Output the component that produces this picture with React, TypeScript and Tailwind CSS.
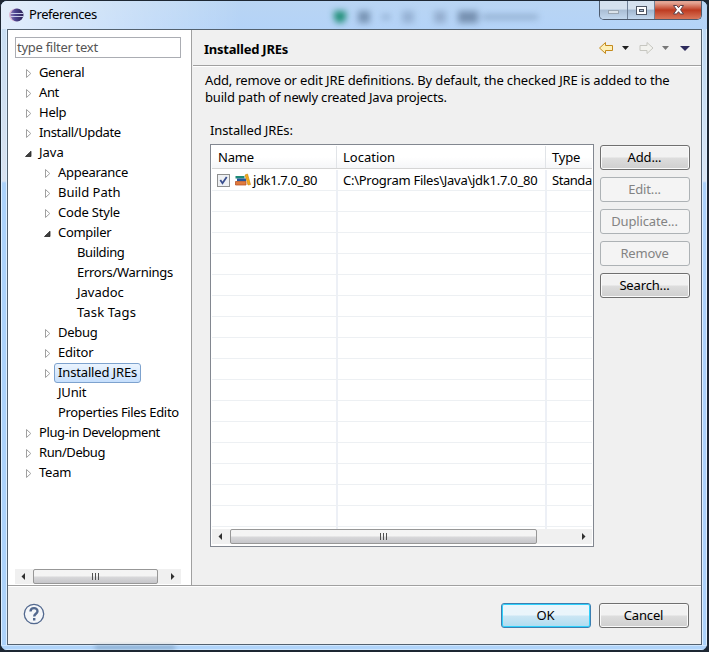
import { ReactNode } from "react";
import clsx from "clsx";

type TreeItem = {
  label: string;
  level: 0 | 1 | 2;
  state?: "open" | "closed";
  selected?: boolean;
  tracking?: string;
};

const treeItems: TreeItem[] = [
  { label: "General", level: 0, state: "closed", tracking: "tracking-[-0.4px]" },
  { label: "Ant", level: 0, state: "closed", tracking: "tracking-[-0.4px]" },
  { label: "Help", level: 0, state: "closed", tracking: "tracking-[-0.25px]" },
  { label: "Install/Update", level: 0, state: "closed", tracking: "tracking-[-0.37px]" },
  { label: "Java", level: 0, state: "open" },
  { label: "Appearance", level: 1, state: "closed", tracking: "tracking-[-0.3px]" },
  { label: "Build Path", level: 1, state: "closed" },
  { label: "Code Style", level: 1, state: "closed", tracking: "tracking-[-0.2px]" },
  { label: "Compiler", level: 1, state: "open", tracking: "tracking-[-0.3px]" },
  { label: "Building", level: 2, tracking: "tracking-[-0.4px]" },
  { label: "Errors/Warnings", level: 2, tracking: "tracking-[-0.28px]" },
  { label: "Javadoc", level: 2 },
  { label: "Task Tags", level: 2, tracking: "tracking-[0.15px]" },
  { label: "Debug", level: 1, state: "closed", tracking: "tracking-[-0.3px]" },
  { label: "Editor", level: 1, state: "closed", tracking: "tracking-[-0.2px]" },
  {
    label: "Installed JREs",
    level: 1,
    state: "closed",
    selected: true,
    tracking: "tracking-[-0.15px]",
  },
  { label: "JUnit", level: 1, tracking: "tracking-[-0.2px]" },
  { label: "Properties Files Edito", level: 1, tracking: "tracking-[-0.33px]" },
  { label: "Plug-in Development", level: 0, state: "closed", tracking: "tracking-[-0.38px]" },
  { label: "Run/Debug", level: 0, state: "closed", tracking: "tracking-[-0.42px]" },
  { label: "Team", level: 0, state: "closed", tracking: "tracking-[-0.25px]" },
];

function Twisty({ state }: { state?: "open" | "closed" }) {
  return (
    <svg width="9" height="11" viewBox="0 0 9 11" className="shrink-0">
      {state === "closed" && (
        <path d="M2.5 1.5v8l4.300-4z" fill="#fff" stroke="#a0a0a0" />
      )}
      {state === "open" && (
        <path d="M7 3.200v5.300H1.500z" fill="#404040" stroke="#262626" strokeWidth="0.8" />
      )}
    </svg>
  );
}

function TreeRow({ item }: { item: TreeItem }) {
  return (
    <div
      className={clsx(
        "flex h-5 items-center",
        item.level === 0 && "pl-[9px]",
        item.level === 1 && "pl-7",
        item.level === 2 && "pl-[47px]",
      )}
    >
      <Twisty state={item.state} />
      <span
        className={clsx(
          "ml-[2px] flex h-5 items-center rounded-[3px] border px-[3px] pb-[2px]",
          item.tracking,
          item.selected
            ? "border-[#7da2ce] bg-linear-to-b from-[#ebf4fe] to-[#c6dffc]"
            : "border-transparent",
        )}
      >
        {item.label}
      </span>
    </div>
  );
}

function ScrollBar({ thumb }: { thumb: string }) {
  return (
    <div className="flex h-[15px] shrink-0 items-center bg-[#f0f0f0]">
      <svg width="18" height="15" className="shrink-0">
        <path d="M10 4v7L6.5 7.5z" fill="#303030" />
      </svg>
      <div
        className={clsx(
          "flex h-[15px] items-center justify-center gap-[2px] rounded-[2px] border border-[#979797] bg-linear-to-b from-[#f4f4f4] from-45% via-[#d8d8da] via-55% to-[#c6c6ca]",
          thumb,
        )}
      >
        <i className="h-[7px] w-px bg-[#505050]" />
        <i className="h-[7px] w-px bg-[#505050]" />
        <i className="h-[7px] w-px bg-[#505050]" />
      </div>
      <div className="grow" />
      <svg width="18" height="15" className="shrink-0">
        <path d="M8 4v7l3.500-3.500z" fill="#303030" />
      </svg>
    </div>
  );
}

function Button({
  children,
  disabled,
  primary,
}: {
  children: ReactNode;
  disabled?: boolean;
  primary?: boolean;
}) {
  return (
    <button
      disabled={disabled}
      className={clsx(
        "flex h-[25px] w-[90px] items-center justify-center rounded-[3px] border pr-px tracking-[-0.15px]",
        disabled && "border-[#adb2b5] bg-[#f4f4f4] text-[#838383]",
        primary &&
          "border-[#3c7fb1] bg-linear-to-b from-[#eaf5fb] from-48% via-[#cbe6f4] via-52% to-[#aedcf0] shadow-[inset_0_0_0_1px_#2fd0fb]",
        !disabled &&
          !primary &&
          "border-[#707070] bg-linear-to-b from-[#f2f2f2] from-48% via-[#dddddd] via-52% to-[#cfcfcf] shadow-[inset_0_0_0_1px_#fafafa]",
      )}
    >
      {children}
    </button>
  );
}

function EclipseIcon() {
  return (
    <svg width="15" height="14" viewBox="0 0 15 14" className="shrink-0">
      <defs>
        <linearGradient id="ball" x1="0" x2="1">
          <stop offset="0" stopColor="#8d7ab4" />
          <stop offset="0.35" stopColor="#4d4591" />
          <stop offset="1" stopColor="#2c2255" />
        </linearGradient>
      </defs>
      <circle cx="6.500" cy="7" r="6.500" fill="#dcbcd6" />
      <circle cx="8" cy="7" r="6.500" fill="url(#ball)" />
      <path d="M1.500 5.500h13M1.500 8.500h13" stroke="#c9cdea" strokeWidth="1" />
    </svg>
  );
}

function TitleBar() {
  return (
    <div className="relative flex h-7 shrink-0 justify-between bg-linear-to-b from-[#b9d5f3] to-[#b4d3f8]">
      <div className="absolute left-0 top-0 h-7 w-60 bg-linear-to-r from-white/60 to-transparent" />
      <div className="absolute left-[333px] top-[10px] flex items-center gap-3 blur-[3px]">
        <i className="h-3 w-3 rounded-b-full bg-[#1f8f78]" />
        <i className="h-3 w-3 bg-[#7894b4]" />
        <i className="h-1 w-2 bg-[#8aa6c8]" />
        <i className="h-3 w-3 bg-[#96b2d4]" />
        <i className="ml-2 h-3 w-3 bg-[#94aecf]" />
        <i className="h-3 w-5 bg-[#7690b0]" />
        <i className="-ml-2 h-1 w-14 bg-[#8aa6c6]" />
      </div>
      <div className="relative flex items-center gap-[5px] pb-px pl-[8px]">
        <EclipseIcon />
        <span className="tracking-[-0.42px]">Preferences</span>
      </div>
      <div className="relative mr-[5px] flex h-[19px] overflow-hidden rounded-b-[5px] border border-t-0 border-[#4d5b6e]">
        <div className="flex w-7 items-center justify-center border-r border-[#6f8096] bg-linear-to-b from-[#d5e1ee] from-45% via-[#a9bdd4] via-50% to-[#c3d8ee] pt-1">
          <svg width="13" height="6">
            <rect x="1.500" y="1.500" width="10" height="3" fill="#dbe3ea" stroke="#9aa6b2" />
          </svg>
        </div>
        <div className="flex w-[27px] items-center justify-center border-r border-[#6f8096] bg-linear-to-b from-[#d5e1ee] from-45% via-[#a0b6cf] via-50% to-[#c3d8ee]">
          <svg width="13" height="11">
            <rect x="1.500" y="1.500" width="10" height="8" fill="#fff" stroke="#4d5564" />
            <rect x="4.500" y="4.500" width="4" height="2" fill="#a8bad0" stroke="#4d5564" />
          </svg>
        </div>
        <div className="flex w-[46px] items-center justify-center bg-linear-to-b from-[#e3a493] from-10% via-[#bd3a20] via-50% to-[#d9765a]">
          <svg width="13" height="12" viewBox="0 0 13 12">
            <path
              d="M1.500 1.500h3.200l1.800 2.200 1.800-2.200h3.200L8.500 5.700l3 4.300H8.300L6.500 7.700 4.700 10H1.500l3-4.300z"
              fill="#fff"
              stroke="#5b4048"
            />
          </svg>
        </div>
      </div>
    </div>
  );
}

function Sidebar() {
  return (
    <div className="flex w-[184px] shrink-0 flex-col border-r border-[#a0a0a0] bg-white pl-[7px] pr-[10px] pt-[7px]">
      <div className="flex h-[21px] shrink-0 items-center border border-[#abadb3] pl-px tracking-[-0.28px] text-[#555]">
        type filter text
      </div>
      <div className="mt-[5px] grow overflow-hidden whitespace-nowrap">
        {treeItems.map((item) => (
          <TreeRow key={item.label} item={item} />
        ))}
      </div>
      <div className="mb-px">
        <ScrollBar thumb="w-[125px]" />
      </div>
    </div>
  );
}

function NavArrows() {
  return (
    <svg width="94" height="14" viewBox="0 0 94 14">
      <path d="M1.500 7l6-5.500v3h7v5h-7v3z" fill="#fdf0b8" stroke="#c48a1c" />
      <path d="M24 5h7l-3.500 4z" fill="#202020" />
      <path d="M55 7l-6-5.500v3h-7v5h7v3z" fill="#f2f2ee" stroke="#c6c6c0" />
      <path d="M64 5h7l-3.500 4z" fill="#777" />
      <path d="M82 5h10l-5 5z" fill="#2d2a5c" />
    </svg>
  );
}

function LibraryIcon() {
  return (
    <svg width="16" height="14" viewBox="0 0 16 14" className="shrink-0">
      <path d="M0.500 3h9v2.500h-9z" fill="#1f8a78" />
      <path d="M2 5.500h9V8H2z" fill="#27579c" />
      <path d="M0.500 8.500h10.500v3.500H0.500z" fill="#e07a3c" stroke="#b9552a" strokeWidth="0.8" />
      <path d="M10 2l2.500-1L15.500 11.500l-2.500.5z" fill="#f2a91e" stroke="#c98208" strokeWidth="0.6" />
    </svg>
  );
}

function JreTable() {
  return (
    <div className="flex h-[403px] w-[384px] flex-col border border-[#828790] bg-white px-px pb-[2px] pt-px">
      <div className="flex h-[23px] shrink-0 items-center overflow-hidden whitespace-nowrap border-b border-[#d5d5d5] bg-linear-to-b from-white from-50% to-[#f5f6f8]">
        <div className="flex h-full w-[125px] shrink-0 items-center border-r border-[#e1e4e8] pl-[6px] tracking-[-0.2px]">
          Name
        </div>
        <div className="flex h-full w-[209px] shrink-0 items-center border-r border-[#e1e4e8] pl-[6px]">
          Location
        </div>
        <div className="pl-[6px] tracking-[-0.2px]">Type</div>
      </div>
      <div className="flex h-0 grow flex-col overflow-hidden">
        {Array.from({ length: 18 }, (_, row) => (
          <div
            key={row}
            className={clsx(
              "flex shrink-0 overflow-hidden whitespace-nowrap border-b border-[#edf0f3]",
              row === 0 ? "h-[22px] pt-px" : "h-[21px]",
            )}
          >
            <div className="flex w-[126px] shrink-0 items-center border-r-2 border-[#edf0f6] pl-[5px]">
              {row === 0 && (
                <>
                  <span className="mr-[5px] flex h-[13px] w-[13px] shrink-0 items-center justify-center border border-[#8e8f8f] bg-[#eef0f3]">
                    <svg width="9" height="9" viewBox="0 0 9 9">
                      <path d="M1.300 4l2.200 3.200L7.700 1" fill="none" stroke="#3a4f8f" strokeWidth="1.800" />
                    </svg>
                  </span>
                  <LibraryIcon />
                  <span className="ml-[2px] tracking-[-0.38px]">jdk1.7.0_80</span>
                </>
              )}
            </div>
            <div className="flex w-[209px] shrink-0 items-center border-r-2 border-[#edf0f6] pl-[5px] tracking-[-0.26px]">
              {row === 0 && "C:\\Program Files\\Java\\jdk1.7.0_80"}
            </div>
            <div className="flex items-center pl-[5px] tracking-[-0.45px]">{row === 0 && "Standa"}</div>
          </div>
        ))}
      </div>
      <ScrollBar thumb="w-[307px]" />
    </div>
  );
}

function JrePage() {
  return (
    <div className="flex grow flex-col pl-px">
      <div className="flex h-9 shrink-0 items-center justify-between border-b border-[#a0a0a0] pl-[11px] pr-[9px]">
        <h1 className="pt-[3px] font-bold tracking-[-0.22px]">Installed JREs</h1>
        <NavArrows />
      </div>
      <div className="border-t border-white pl-[12px]">
        <p className="mt-[5px] leading-[17px] tracking-[-0.15px]">
          Add, remove or edit JRE definitions. By default, the checked JRE is added to the
          <br />
          <span className="tracking-[-0.19px]">build path of newly created Java projects.</span>
        </p>
      </div>
      <div className="mt-[16px] pl-[17px] leading-[17px] tracking-[-0.12px]">Installed JREs:</div>
      <div className="mt-[5px] flex gap-[6px] pl-[17px]">
        <JreTable />
        <div className="mt-px flex flex-col gap-[7px]">
          <Button>Add...</Button>
          <Button disabled>Edit...</Button>
          <Button disabled>Duplicate...</Button>
          <Button disabled>Remove</Button>
          <Button>Search...</Button>
        </div>
      </div>
    </div>
  );
}

function Footer() {
  return (
    <div className="flex h-[59px] shrink-0 items-center justify-between border-t border-[#a0a0a0] pl-[15px] pr-3 shadow-[inset_0_1px_0_#fff]">
      <svg width="22" height="22" viewBox="0 0 22 22" className="mb-[2px]">
        <circle cx="11" cy="11" r="9.700" fill="#f4f6f9" stroke="#53698f" strokeWidth="1.300" />
        <path
          d="M7.500 8.500c0-4.500 7-4.500 7-.3 0 2.600-3.300 2.600-3.300 5.300M11.200 15v2.500"
          fill="none"
          stroke="#53698f"
          strokeWidth="2.400"
        />
      </svg>
      <div className="flex gap-2">
        <Button primary>OK</Button>
        <Button>Cancel</Button>
      </div>
    </div>
  );
}

export default function App() {
  return (
    <div className="h-[652px] w-[709px] overflow-hidden bg-[#1d2733] font-['Noto_Sans','Open_Sans',sans-serif] text-[13px] leading-none text-black">
      <div className="flex h-[651px] w-[708px] flex-col overflow-hidden rounded-[7px] border border-[#1d2733] bg-[#b0d4fa]">
        <TitleBar />
        <div className="flex h-[616px] shrink-0">
          <div className="w-[6px] shrink-0 border-x border-[#dceeff] bg-linear-to-b from-[#c9def2] via-[#d9e2ef] via-[152px] to-[#acd2fa] to-[154px]" />
          <div className="flex w-[695px] shrink-0 flex-col border border-[#53616f] bg-[#f0f0f0]">
            <div className="flex h-[555px] shrink-0">
              <Sidebar />
              <JrePage />
            </div>
            <Footer />
          </div>
          <div className="grow border-x border-[#dceeff] bg-linear-to-b from-[#bcd8f4] via-[#dbe6f2] via-[152px] to-[#acd2fa] to-[154px]" />
        </div>
        <div className="h-[5px] border-y border-[#cfe6fd]">
          <div className="ml-[94px] h-[3px] w-20 bg-[#7f9fc0] blur-[2px]" />
        </div>
      </div>
    </div>
  );
}
